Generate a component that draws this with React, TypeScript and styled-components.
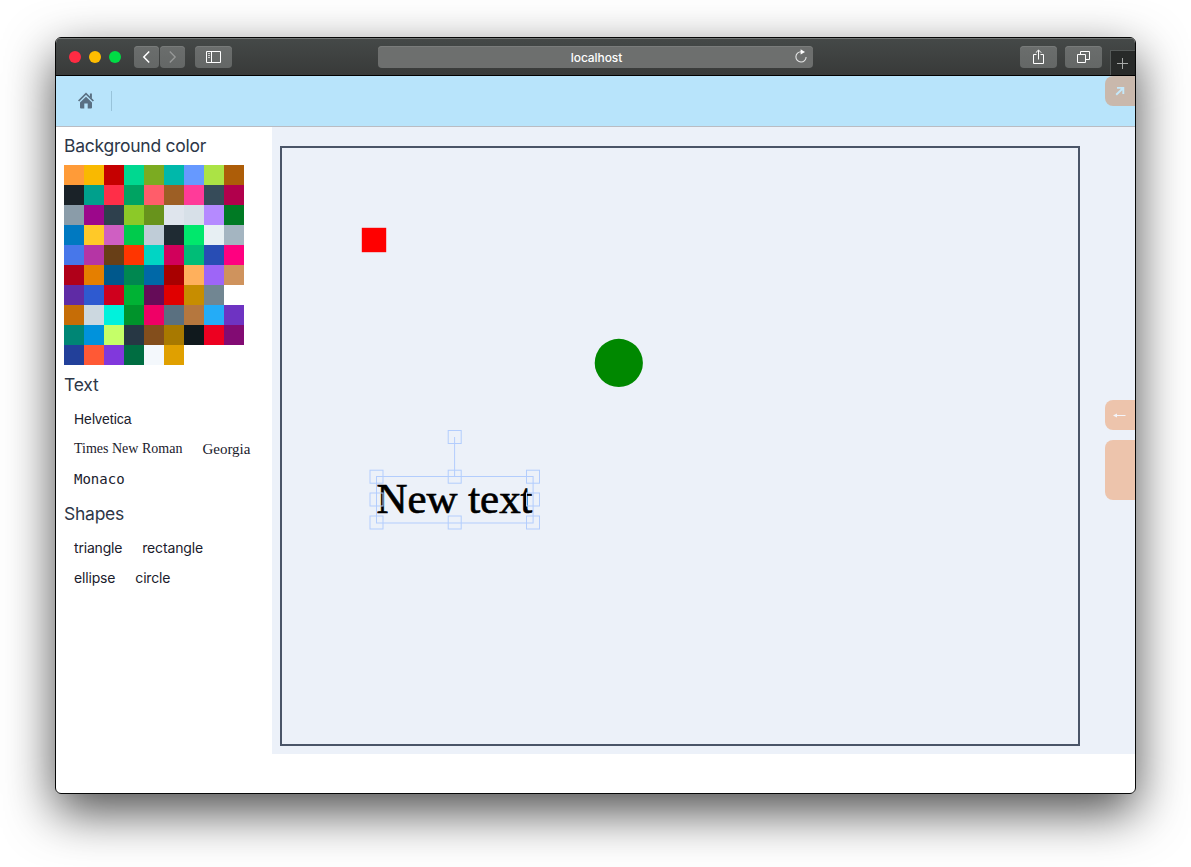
import React from 'react';
import styled, { createGlobalStyle } from 'styled-components';

const GlobalStyle = createGlobalStyle`
  * { box-sizing: border-box; }
  body {
    margin: 0;
    background: #fff;
    font-family: Inter, "Liberation Sans", sans-serif;
    overflow: hidden;
  }
  svg { display: block; }
`;

const Desktop = styled.div`
  height: 867px;
  padding: 37px 55px 0;
`;

const Window = styled.div`
  position: relative;
  width: 1081px;
  height: 757px;
  border: 1px solid #060707;
  border-radius: 6px;
  background: #fff;
  overflow: hidden;
`;

const Shadow = styled.div`
  width: 1081px;
  border-radius: 6px;
  box-shadow: 0 18px 50px rgba(0, 0, 0, 0.7);
`;

const TitleBar = styled.div`
  display: flex;
  align-items: flex-start;
  height: 38px;
  padding: 8px 0 0 13px;
  background: linear-gradient(#454948, #383a39);
  border-bottom: 1px solid #000;
  box-shadow: inset 0 1px 0 #727675;
`;

const Lights = styled.div`
  display: flex;
  gap: 8px;
  padding-top: 5px;
  width: 65px;
`;

const Light = styled.span<{ $color: string }>`
  width: 12px;
  height: 12px;
  border-radius: 50%;
  background: ${(p) => p.$color};
`;

const BarButton = styled.div<{ $w: number; $ml?: number }>`
  display: flex;
  align-items: center;
  justify-content: center;
  width: ${(p) => p.$w}px;
  height: 22px;
  margin-left: ${(p) => p.$ml ?? 0}px;
  border-radius: 4px;
  background: linear-gradient(#6b6e6d, #646766);
  box-shadow: inset 0 1px 0 #787b7a;
`;

const Address = styled.div`
  display: flex;
  align-items: center;
  justify-content: flex-end;
  width: 435px;
  height: 22px;
  margin-left: 146px;
  padding-right: 5px;
  border-radius: 4px;
  background: #6d6f6e;
  box-shadow: inset 0 1px 0 #7a7c7b;
  color: #fff;
  font-size: 12px;
  font-weight: 500;
`;

const AddressText = styled.span`
  flex: 1;
  padding: 1px 0 0 21px;
  text-align: center;
  line-height: 22px;
  letter-spacing: -0.1px;
`;

const NewTab = styled.div`
  display: flex;
  align-items: center;
  justify-content: center;
  width: 25px;
  height: 25px;
  margin: 4px 0 0 8px;
  padding-right: 1px;
  border: solid #555958;
  border-width: 1px 0 0 1px;
  background: #282a29;
`;

const Header = styled.div`
  display: flex;
  align-items: center;
  height: 51px;
  padding-left: 22px;
  background: #b8e4fb;
  border-bottom: 1px solid #b9bcc3;
`;

const Divider = styled.span`
  width: 1px;
  height: 20px;
  margin-left: 17px;
  background: #98c3da;
`;

const Body = styled.div`
  display: flex;
`;

const Sidebar = styled.aside`
  width: 216px;
  padding: 0 8px;
`;

const Heading = styled.h2<{ $top?: number }>`
  height: 28px;
  margin: ${(p) => p.$top ?? 6}px 0 5px;
  color: #2d3748;
  font-size: 17.5px;
  font-weight: 400;
  line-height: 28px;
  letter-spacing: -0.25px;
  white-space: nowrap;
`;

const Palette = styled.div`
  display: grid;
  grid-template-columns: repeat(9, 20px);
  grid-auto-rows: 20px;
`;

const Swatch = styled.span<{ $color: string }>`
  background: ${(p) => p.$color};
`;

const Options = styled.div`
  display: flex;
  flex-wrap: wrap;
`;

const Option = styled.span<{ $font?: string; $spacing?: number; $size?: number }>`
  height: 30px;
  padding: 0 10px;
  color: #1a202c;
  font-family: ${(p) => p.$font ?? 'Inter, sans-serif'};
  font-size: ${(p) => p.$size ?? 14}px;
  line-height: 30px;
  letter-spacing: ${(p) => p.$spacing ?? 0}px;
  white-space: nowrap;
`;

const Workspace = styled.main`
  width: 863px;
  height: 627px;
  padding: 19px 0 0 8px;
  background: #ecf1f9;
`;

const Stage = styled.div`
  width: 800px;
  height: 600px;
  border: 2px solid #4a5568;
`;

const SideTab = styled.div<{ $top: number; $h: number; $color: string }>`
  position: absolute;
  right: 0;
  top: ${(p) => p.$top}px;
  display: flex;
  align-items: center;
  justify-content: center;
  width: 30px;
  height: ${(p) => p.$h}px;
  border-radius: 8px 0 0 8px;
  background: ${(p) => p.$color};
`;

const COLORS = [
  '#ff9b38', '#f9b900', '#c50000', '#00d890', '#7bab21', '#00b8aa', '#6699ff', '#abe345', '#ad5d08',
  '#1a2228', '#00a08c', '#ff2e48', '#00a362', '#ff5d6a', '#9d5f25', '#ff3b99', '#364b59', '#b1004c',
  '#8a9ca9', '#9c078b', '#2e404d', '#8cc928', '#68931c', '#dfe5ed', '#d7e0e8', '#b58aff', '#007a24',
  '#0079c1', '#ffc928', '#cf5fc2', '#00cb4c', '#bfccd7', '#1f2b33', '#00e86c', '#e7eff3', '#a4b5c1',
  '#4777ea', '#b535a5', '#683f17', '#ff3500', '#00d5c4', '#d1005b', '#00bd77', '#284db4', '#ff0080',
  '#b00019', '#e57f00', '#00588c', '#008750', '#0068a7', '#a80000', '#ffb05c', '#9e65f7', '#cf935d',
  '#5f2ba5', '#2e5ad0', '#cf001d', '#00b234', '#650c58', '#e00000', '#c78d00', '#718692', '#ffffff',
  '#c66d06', '#ccd8e0', '#00f2dc', '#00932b', '#ef0066', '#5a7080', '#b5773e', '#24acf7', '#6e33c2',
  '#008675', '#0092dc', '#c5ff68', '#273744', '#834e1c', '#a87900', '#10191d', '#ed0020', '#820b73',
  '#22409a', '#ff5935', '#8138dc', '#006d41', '#f4f8fc', '#e0a000',
];

const ANCHORS: [number, number][] = [
  [172.7, 289], [94.5, 328.7], [172.7, 328.7], [251, 328.7],
  [94.5, 351.5], [251, 351.5], [94.5, 374.5], [172.7, 374.5], [251, 374.5],
];

function HomeIcon() {
  return (
    <svg width="16" height="18" viewBox="0 0 16 18" fill="none">
      <path d="M.6 9 8 1.7l7.4 7.3" stroke="#5a7083" strokeWidth="1.7" />
      <path d="M11.9 1.5h2v5.2l-2-2z" fill="#5a7083" />
      <path d="M8 4.8 14 10.6V15.4q0 1-1 1H9.7v-4.9H6.3v4.9H3q-1 0-1-1v-4.8z" fill="#5a7083" />
    </svg>
  );
}

export default function App() {
  return (
    <Desktop>
      <GlobalStyle />
      <Shadow>
        <Window>
          <TitleBar>
            <Lights>
              <Light $color="#ff2b43" />
              <Light $color="#ffbd00" />
              <Light $color="#00dc45" />
            </Lights>
            <BarButton $w={25}>
              <svg width="9" height="14" viewBox="0 0 9 14" fill="none">
                <path d="M7.2 1.5 1.8 7l5.4 5.5" stroke="#fff" strokeWidth="1.5" />
              </svg>
            </BarButton>
            <BarButton $w={25} $ml={1}>
              <svg width="9" height="14" viewBox="0 0 9 14" fill="none">
                <path d="M1.8 1.5 7.2 7l-5.4 5.5" stroke="#979998" strokeWidth="1.3" />
              </svg>
            </BarButton>
            <BarButton $w={37} $ml={10}>
              <svg width="15" height="12" viewBox="0 0 15 12" fill="none" stroke="#fff">
                <path d="M.5.5h14v11H.5zM5.5.5v11" />
                <path d="M2 2.5h2M2 4.5h2M2 6.5h2" stroke="#d0d1d1" />
              </svg>
            </BarButton>
            <Address>
              <AddressText>localhost</AddressText>
              <svg width="14" height="16" viewBox="0 0 14 16" fill="none">
                <path d="M7.2 2.8A5.1 5.1 0 1 0 12.1 7.9" stroke="#e5e6e6" strokeWidth="1.1" />
                <path d="M6.6.2v5.2L11 2.9z" fill="#fff" />
              </svg>
            </Address>
            <BarButton $w={37} $ml={207}>
              <svg width="11" height="16" viewBox="0 0 11 16" fill="none" stroke="#fff">
                <path d="M3.5 5.5h-3v9h10v-9h-3M5.5 10.5V1.2M2.8 3.7l2.7-2.7 2.7 2.7" />
              </svg>
            </BarButton>
            <BarButton $w={37} $ml={8}>
              <svg width="13" height="14" viewBox="0 0 13 14" fill="none" stroke="#fff">
                <path d="M.5 4.5h8v8h-8zM3.5 4V1.5h9v8H9" />
              </svg>
            </BarButton>
            <NewTab>
              <svg width="11" height="11" viewBox="0 0 11 11" stroke="#a8aaa9">
                <path d="M5.5 0v11M0 5.5h11" />
              </svg>
            </NewTab>
          </TitleBar>
          <Header>
            <HomeIcon />
            <Divider />
          </Header>
          <Body>
            <Sidebar>
              <Heading $top={5}>Background color</Heading>
              <Palette>
                {COLORS.map((c) => <Swatch key={c} $color={c} />)}
              </Palette>
              <Heading>Text</Heading>
              <Options>
                <Option $font='"Liberation Sans", Helvetica, sans-serif'>Helvetica</Option>
                <Option $font='"Liberation Serif", "Times New Roman", serif'>Times New Roman</Option>
                <Option $font='"Liberation Serif", Georgia, serif' $size={15}>Georgia</Option>
                <Option $font='"DejaVu Sans Mono", Monaco, monospace'>Monaco</Option>
              </Options>
              <Heading>Shapes</Heading>
              <Options>
                <Option $spacing={-0.19}>triangle</Option>
                <Option $spacing={-0.15}>rectangle</Option>
                <Option $spacing={-0.17}>ellipse</Option>
                <Option $spacing={-0.15}>circle</Option>
              </Options>
            </Sidebar>
            <Workspace>
              <Stage>
                <svg width="796" height="596" viewBox="0 0 796 596">
                  <rect x="79.8" y="79.8" width="24.4" height="24.4" fill="#f00" />
                  <circle cx="336.8" cy="214.9" r="24.1" fill="#008800" />
                  <text
                    x="94.5"
                    y="364.5"
                    textLength="156"
                    lengthAdjust="spacingAndGlyphs"
                    fontFamily='"Liberation Serif", Georgia, serif'
                    fontSize="42"
                    stroke="#000"
                    strokeWidth="0.7"
                  >
                    New text
                  </text>
                  <g fill="none" stroke="#b3cdfd">
                    <rect x="94.5" y="328.5" width="156.6" height="46.5" />
                    <path d="M172.6 289v39.5" />
                    {ANCHORS.map(([x, y]) => (
                      <rect key={`${x}-${y}`} x={x - 6.5} y={y - 6.5} width="13" height="13" />
                    ))}
                  </g>
                </svg>
              </Stage>
            </Workspace>
          </Body>
          <SideTab $top={38} $h={30} $color="#c9b8ac">
            <svg width="10" height="10" viewBox="0 0 10 10" fill="none" stroke="#c4e8fa" strokeWidth="1.9">
              <path d="M1.2 8.7 8 2.2M2 1.9h6.3v6" />
            </svg>
          </SideTab>
          <SideTab $top={362} $h={30} $color="#edc4ac">
            <svg width="14" height="5" viewBox="0 0 14 5">
              <path d="M0 2.5 4 .5V2h8.5v1H4v1.5z" fill="#f4f5fa" />
            </svg>
          </SideTab>
          <SideTab $top={402} $h={60} $color="#edc4ac" />
        </Window>
      </Shadow>
    </Desktop>
  );
}
